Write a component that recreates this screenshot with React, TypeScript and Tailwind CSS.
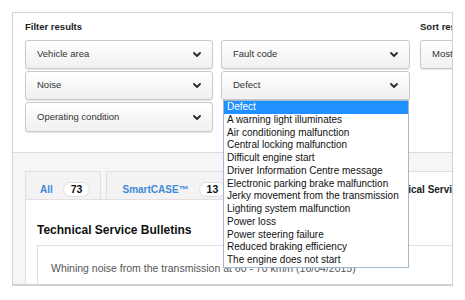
import React from 'react';

const defects = [
  'Defect',
  'A warning light illuminates',
  'Air conditioning malfunction',
  'Central locking malfunction',
  'Difficult engine start',
  'Driver Information Centre message',
  'Electronic parking brake malfunction',
  'Jerky movement from the transmission',
  'Lighting system malfunction',
  'Power loss',
  'Power steering failure',
  'Reduced braking efficiency',
  'The engine does not start',
];

function Chevron() {
  return (
    <svg width="8" height="5" viewBox="0 0 8 5" className="shrink-0">
      <polyline points="1,1 4,4 7,1" fill="none" stroke="#2b2b2b" strokeWidth="1.8" strokeLinecap="round" strokeLinejoin="round" />
    </svg>
  );
}

function FakeSelect({ label, tall, children }: { label: string; tall?: boolean; children?: React.ReactNode }) {
  return (
    <div
      className={`relative flex items-center rounded-[3px] border border-[#c9c9c9] bg-linear-to-b from-white to-[#f0f0f0] pl-[11px] pr-[11px] shadow-[0_1px_1px_rgba(0,0,0,0.1)] ${tall ? 'h-[30px]' : 'h-[29px]'}`}
    >
      <span className="flex-1 truncate text-[9.5px] text-[#333]">{label}</span>
      <Chevron />
      {children}
    </div>
  );
}

function Badge({ n }: { n: number }) {
  return (
    <span className="flex h-[15px] items-center rounded-full border border-[#dedede] bg-white px-[7px] text-[10.5px] font-bold text-[#111]">
      {n}
    </span>
  );
}

export default function App() {
  return (
    <div className="h-[300px] w-[465px] bg-white font-['Liberation_Sans',Arial,sans-serif]">
      <div className="ml-[12px] pt-[12px]">
        <div className="h-[274px] w-[441px] overflow-hidden border border-b-2 border-[#d2d2d2]">
          {/* Filters */}
          <div className="flex border-b border-[#dcdcdc] bg-white pb-[20px] pl-[12px] pt-[8px]">
            <div className="w-[385px] shrink-0">
              <h3 className="mb-[7px] text-[9.5px] font-bold leading-[12px] text-[#222]">Filter results</h3>
              <div className="grid grid-cols-[188px_189px] gap-x-[8px] gap-y-[2px]">
                <FakeSelect label="Vehicle area" />
                <FakeSelect label="Fault code" />
                <FakeSelect label="Noise" />
                <FakeSelect label="Defect">
                  <ul className="absolute left-px right-0 top-[calc(100%+1px)] z-20 border border-[#a3b8d2] bg-white">
                    {defects.map((d, i) => (
                      <li
                        key={d}
                        className={`h-[12.75px] whitespace-nowrap pl-[3px] text-[10px] leading-[12.75px] ${i === 0 ? 'bg-[#1e90ff] text-white' : 'text-[#111]'}`}
                      >
                        {d}
                      </li>
                    ))}
                  </ul>
                </FakeSelect>
                <FakeSelect label="Operating condition" tall />
              </div>
            </div>
            <div className="ml-[10px] w-[160px] shrink-0">
              <h3 className="mb-[7px] text-[9.5px] font-bold leading-[12px] text-[#222]">Sort results</h3>
              <FakeSelect label="Most recent" />
            </div>
          </div>

          {/* Results */}
          <div className="bg-[#f6f6f6] pl-[12px] pt-[18px]">
            <div className="flex w-[600px] items-end gap-[5px]">
              <div className="flex h-[28px] items-center gap-[10px] border border-b-0 border-[#e0e0e0] bg-[#f3f3f3] pl-[14px] pr-[10px] pt-[8px]">
                <span className="text-[10px] font-bold text-[#3d8ad8]">All</span>
                <Badge n={73} />
              </div>
              <div className="flex h-[28px] w-[252px] items-center gap-[10px] border border-b-0 border-[#e0e0e0] bg-[#f3f3f3] pl-[15px] pt-[8px]">
                <span className="text-[10px] font-bold text-[#3d8ad8]">SmartCASE™</span>
                <Badge n={13} />
              </div>
              <div className="relative z-10 -mb-px flex h-[29px] items-center gap-[10px] border border-b-0 border-[#e0e0e0] bg-white pl-[15px] pr-[14px] pt-[7px]">
                <span className="text-[10px] font-bold text-[#222]">Technical Service Bulletins</span>
                <Badge n={60} />
              </div>
            </div>
            <div className="w-[600px] border-l border-t border-[#e0e0e0] bg-white pl-[11px] pt-[23px]">
              <h2 className="mb-[8px] text-[12px] font-bold leading-[14px] text-[#111]">Technical Service Bulletins</h2>
              <div className="h-[60px] border border-[#e0e0e0] bg-white pl-[13px] pt-[16px]">
                <p className="text-[10.5px] leading-[12px] text-[#555]">
                  Whining noise from the transmission at 60 - 70 km/h (16/04/2015)
                </p>
              </div>
            </div>
          </div>
        </div>
      </div>
    </div>
  );
}
